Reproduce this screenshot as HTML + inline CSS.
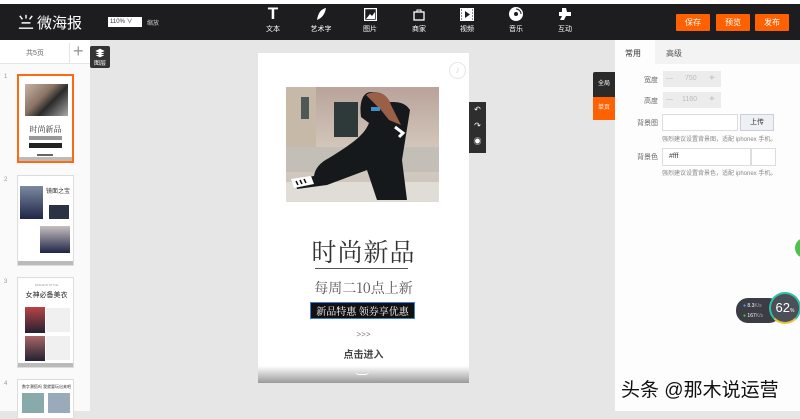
<!DOCTYPE html>
<html><head><meta charset="utf-8"><style>
*{margin:0;padding:0;box-sizing:border-box}
body{width:800px;height:411px;overflow:hidden;background:#e6e6e6;font-family:"Liberation Sans","Noto Sans CJK SC",sans-serif;position:relative;font-size:7px;color:#555}
.a{position:absolute}
.top{left:0;top:0;width:800px;height:4px;background:#fff}
.bar{left:0;top:4px;width:800px;height:36px;background:#1d1d1f}
.tool{position:absolute;top:4px;width:40px;margin-left:-20px;text-align:center;color:#fff;font-size:7px}
.tool .ic{height:14px;margin:3px auto 3px;display:flex;justify-content:center;align-items:center}
.btn{position:absolute;top:14px;height:17px;background:#ff6000;color:#fff;font-size:8px;text-align:center;line-height:17px;border-radius:1px}
.thumb{position:absolute;left:17px;width:57px;background:#fff;border:1px solid #ddd;overflow:hidden}
.num{position:absolute;left:4px;font-size:6px;color:#999}
.lbl{position:absolute;left:620px;width:38px;text-align:right;font-size:7px;color:#666}
.inp{position:absolute;background:#fff;border:1px solid #ddd}
.hint{position:absolute;left:662px;font-size:6px;color:#888}
</style></head><body>
<div class="a top"></div>
<div class="a bar">
 <svg class="a" style="left:17px;top:10px" width="18" height="16" viewBox="0 0 20 18"><g fill="none" stroke="#fff" stroke-width="1.6"><path d="M3 2l3 4M17 2l-3 4M10 1v4M5 10h10M2 16h16"/></g></svg>
 <div class="a" style="left:37px;top:8px;color:#fff;font-size:15px">微海报</div>
 <div class="a" style="left:108px;top:13px;width:34px;height:10px;background:#fff;font-size:6px;color:#333;padding-left:2px;line-height:10px">110% ∨</div>
 <div class="a" style="left:147px;top:14px;color:#ccc;font-size:6px">缩放</div>
</div>
<div class="tool" style="left:273px"><div class="ic" style="font-size:17px;font-weight:bold;line-height:14px">T</div>文本</div>
<div class="tool" style="left:321px"><div class="ic"><svg width="12" height="14"><path d="M2 13C3 6 6 2 11 1C10 7 7 11 2 13Z" fill="#fff"/></svg></div>艺术字</div>
<div class="tool" style="left:370px"><div class="ic"><svg width="13" height="13"><rect x="0.5" y="0.5" width="12" height="12" fill="none" stroke="#fff" stroke-width="1.5"/><path d="M2 11l4-5 2 2 3-4v7z" fill="#fff"/></svg></div>图片</div>
<div class="tool" style="left:419px"><div class="ic"><svg width="12" height="13"><rect x="1" y="4" width="10" height="8" fill="none" stroke="#fff" stroke-width="1.3"/><path d="M4 4V2h4v2" fill="none" stroke="#fff"/></svg></div>商家</div>
<div class="tool" style="left:467px"><div class="ic"><svg width="14" height="13"><rect x="0" y="0" width="14" height="13" fill="#fff"/><path d="M5 3l5 3.5L5 10z" fill="#1d1d1f"/><path d="M1 2h1M1 5h1M1 8h1M1 11h1M12 2h1M12 5h1M12 8h1M12 11h1" stroke="#1d1d1f"/></svg></div>视频</div>
<div class="tool" style="left:516px"><div class="ic"><svg width="14" height="14"><circle cx="7" cy="7" r="7" fill="#fff"/><circle cx="7" cy="7" r="2" fill="#1d1d1f"/><path d="M7 2a5 5 0 0 1 5 5" stroke="#1d1d1f" fill="none"/></svg></div>音乐</div>
<div class="tool" style="left:565px"><div class="ic"><svg width="14" height="14"><path d="M4 1h4l1 4h4v4H8l-2 4H2l2-4H1V5h3z" fill="#fff"/></svg></div>互动</div>
<div class="btn" style="left:676px;width:34px">保存</div>
<div class="btn" style="left:716px;width:34px">预览</div>
<div class="btn" style="left:755px;width:34px">发布</div>

<div class="a" style="left:0;top:40px;width:90px;height:371px;background:#fafafa"></div>
<div class="a" style="left:0;top:40px;width:90px;height:24px;border-bottom:1px solid #e5e5e5;background:#fff"></div>
<div class="a" style="left:26px;top:48px;font-size:7px;color:#666">共5页</div>
<div class="a" style="left:69px;top:43px;width:1px;height:20px;background:#e5e5e5"></div>
<div class="a" style="left:73px;top:41px;font-size:18px;color:#999;line-height:20px">+</div>
<div class="a" style="left:90px;top:46px;width:20px;height:22px;background:#333;border-radius:2px;color:#fff;font-size:6px;text-align:center;padding-top:12px">图层</div>
<svg class="a" style="left:95px;top:48px" width="10" height="10"><path d="M5 1l4 2-4 2-4-2zM1 5l4 2 4-2M1 7l4 2 4-2" fill="#fff" stroke="#fff" stroke-width=".6"/></svg>

<div class="num" style="top:74px">1</div>
<div class="thumb" style="top:74px;height:89px;border:2px solid #ff6a10">
 <div class="a" style="left:6px;top:8px;width:43px;height:32px;background:linear-gradient(135deg,#c9b3a6,#8a7466 40%,#2a2a2a 60%,#aaa)"></div>
 <div class="a" style="left:0;width:53px;top:48px;text-align:center;font-family:'Noto Serif CJK SC',serif;font-size:8px;color:#333">时尚新品</div>
 <div class="a" style="left:10px;top:60px;width:33px;height:4px;background:#999"></div>
 <div class="a" style="left:10px;top:67px;width:33px;height:5px;background:#222"></div>
 <div class="a" style="left:18px;top:78px;width:16px;height:2px;background:#666"></div>
 <div class="a" style="left:0;bottom:0;width:53px;height:4px;background:#bbb"></div>
</div>
<div class="num" style="top:177px">2</div>
<div class="thumb" style="top:175px;height:91px">
 <div class="a" style="left:2px;top:10px;width:23px;height:33px;background:linear-gradient(#7b8aa0,#1f2548)"></div>
 <div class="a" style="left:28px;top:10px;font-size:6px;color:#333">镜面之宝</div>
 <div class="a" style="left:31px;top:29px;width:20px;height:14px;background:#2a3344"></div>
 <div class="a" style="left:22px;top:50px;width:30px;height:27px;background:linear-gradient(#c8c0c0,#1f2548)"></div>
 <div class="a" style="left:0;bottom:0;width:57px;height:4px;background:#bbb"></div>
</div>
<div class="num" style="top:279px">3</div>
<div class="thumb" style="top:277px;height:91px">
 <div class="a" style="left:0;width:57px;top:5px;text-align:center;font-size:3px;color:#999">FASHION STYLE</div>
 <div class="a" style="left:0;width:57px;top:12px;text-align:center;font-size:7px;color:#222">女神必备美衣</div>
 <div class="a" style="left:7px;top:29px;width:20px;height:26px;background:linear-gradient(#b44,#223)"></div>
 <div class="a" style="left:28px;top:30px;width:24px;height:24px;background:#f0f0f0"></div>
 <div class="a" style="left:7px;top:58px;width:20px;height:25px;background:linear-gradient(#a66,#223)"></div>
 <div class="a" style="left:28px;top:58px;width:24px;height:24px;background:#f0f0f0"></div>
 <div class="a" style="left:0;bottom:0;width:57px;height:4px;background:#bbb"></div>
</div>
<div class="num" style="top:381px">4</div>
<div class="thumb" style="top:379px;height:40px">
 <div class="a" style="left:0;width:57px;top:4px;text-align:center;font-size:4px;color:#333">数字潮搭吗 我就要玩出来吧</div>
 <div class="a" style="left:4px;top:13px;width:22px;height:20px;background:#8aa"></div>
 <div class="a" style="left:30px;top:13px;width:22px;height:20px;background:#9ab"></div>
</div>

<div class="a" style="left:258px;top:53px;width:211px;height:330px;background:#fff"></div>
<div class="a" style="left:258px;top:366px;width:211px;height:17px;background:linear-gradient(#fff,#9a9a9a)"></div>
<div class="a" style="left:355px;top:371px;width:14px;height:4px;border-bottom:1px solid #fff;border-radius:0 0 8px 8px"></div>
<div class="a" style="left:449px;top:62px;width:17px;height:17px;border:1px solid #e6e6e6;border-radius:50%;color:#ddd;font-size:10px;text-align:center;line-height:15px">♪</div>
<svg class="a" style="left:286px;top:87px" width="153" height="115" viewBox="0 0 153 115">
 <defs><linearGradient id="s" x1="0" y1="0" x2="0" y2="1"><stop offset="0" stop-color="#b9a39a"/><stop offset=".6" stop-color="#d6cbbf"/><stop offset="1" stop-color="#c9c4bc"/></linearGradient></defs>
 <rect width="153" height="115" fill="url(#s)"/>
 <rect x="0" y="0" width="30" height="80" fill="#c7b9a8"/>
 <rect x="15" y="10" width="8" height="22" fill="#4e5858"/>
 <rect x="48" y="15" width="24" height="35" fill="#2e3a3a"/>
 <rect x="0" y="60" width="153" height="25" fill="#c4bfb6"/>
 <rect x="0" y="95" width="153" height="20" fill="#e0ddd6"/>
 <path d="M85 5c-8 0-12 10-10 25l8 6c-4 10-12 18-40 35-8 4-14 10-15 18l-20 3 3 10 30-4 40-15 10 30h30l-5-40 8-50c-5-8-13-8-20-8-5-8-9-10-19-10z" fill="#16191c"/>
 <path d="M80 8c8-6 22-2 25 10l10 20-12-5-8-10z" fill="#9a6047"/>
 <rect x="85" y="20" width="9" height="4" fill="#3f8fc8"/>
 <path d="M5 92l20-3 3 8-20 4z" fill="#fff"/>
 <path d="M10 94l2 4M14 93l2 4M18 92l2 4" stroke="#111" stroke-width="1.5"/>
 <path d="M109 40l8 6-4 4" stroke="#fff" stroke-width="3" fill="none"/>
</svg>
<div class="a" style="left:258px;width:211px;top:233px;text-align:center;font-family:'Noto Serif CJK SC',serif;font-size:25px;color:#333;letter-spacing:1px">时尚新品</div>
<div class="a" style="left:315px;top:268px;width:93px;height:1px;background:#555"></div>
<div class="a" style="left:258px;width:211px;top:278px;text-align:center;font-family:'Noto Serif CJK SC',serif;font-size:14px;color:#555">每周二10点上新</div>
<div class="a" style="left:310px;top:302px;width:105px;height:17px;background:#111;border:1px solid #3b7fd5;color:#fff;font-size:10px;text-align:center;line-height:15px;font-family:'Noto Serif CJK SC',serif">新品特惠 领券享优惠</div>
<div class="a" style="left:258px;width:211px;top:330px;text-align:center;font-size:8px;color:#777">&gt;&gt;&gt;</div>
<div class="a" style="left:258px;width:211px;top:346px;text-align:center;font-size:10px;color:#444;font-weight:bold">点击进入</div>
<div class="a" style="left:469px;top:102px;width:17px;height:51px;background:#2e2e2e;color:#fff;font-size:8px;text-align:center;line-height:16px">↶<br>↷<br>◉</div>

<div class="a" style="left:593px;top:72px;width:22px;height:25px;background:#2a2a2a;color:#fff;font-size:6px;text-align:center;line-height:25px;border-radius:2px 0 0 0">全局</div>
<div class="a" style="left:593px;top:97px;width:22px;height:23px;background:#ff6000;color:#fff;font-size:6px;text-align:center;line-height:23px">单页</div>
<div class="a" style="left:615px;top:40px;width:185px;height:371px;background:#fdfdfd"></div>
<div class="a" style="left:655px;top:40px;width:145px;height:24px;background:#f3f3f3"></div>
<div class="a" style="left:625px;top:48px;font-size:8px;color:#333">常用</div>
<div class="a" style="left:666px;top:48px;font-size:8px;color:#555">高级</div>
<div class="lbl" style="top:75px">宽度</div>
<div class="lbl" style="top:96px">高度</div>
<div class="a" style="left:663px;top:71px;width:58px;height:16px;background:#ececec;color:#bbb;font-size:7px;line-height:16px"><span style="position:absolute;left:3px">—</span><span style="position:absolute;left:22px">750</span><span style="position:absolute;left:46px;font-size:10px">+</span></div>
<div class="a" style="left:663px;top:92px;width:58px;height:16px;background:#ececec;color:#bbb;font-size:7px;line-height:16px"><span style="position:absolute;left:3px">—</span><span style="position:absolute;left:19px">1160</span><span style="position:absolute;left:46px;font-size:10px">+</span></div>
<div class="lbl" style="top:118px">背景图</div>
<div class="inp" style="left:662px;top:114px;width:76px;height:17px"></div>
<div class="a" style="left:740px;top:114px;width:34px;height:17px;background:#eef1f4;border:1px solid #ccd;font-size:7px;color:#333;text-align:center;line-height:15px">上传</div>
<div class="hint" style="top:134px">强烈建议设置背景图，适配 iphonex 手机。</div>
<div class="lbl" style="top:152px">背景色</div>
<div class="inp" style="left:662px;top:148px;width:89px;height:18px;font-size:7px;color:#444;padding:4px 6px">#fff</div>
<div class="inp" style="left:751px;top:148px;width:25px;height:18px"></div>
<div class="hint" style="top:168px">强烈建议设置背景色，适配 iphonex 手机。</div>

<div class="a" style="left:795px;top:238px;width:20px;height:20px;border-radius:50%;background:#4cc14c"></div>
<div class="a" style="left:736px;top:298px;width:45px;height:25px;background:#3a3d44;border-radius:12px;color:#fff;font-size:5px;padding:3px 0 0 7px;line-height:10px"><span style="color:#4aa8e8">●</span> 8.3<span style="color:#aaa">K/s</span><br><span style="color:#4c4">●</span> 167<span style="color:#aaa">K/s</span></div>
<div class="a" style="left:769px;top:292px;width:32px;height:32px;border-radius:50%;background:#4b4f57;border:2px solid #2fbfa8;border-bottom-color:#e6c43a;color:#fff;font-size:13px;text-align:center;line-height:28px">62<span style="font-size:5px">%</span></div>
<div class="a" style="left:621px;top:375px;font-size:19px;color:#111;text-shadow:0 0 2px #fff">头条 @那木说运营</div>
</body></html>
